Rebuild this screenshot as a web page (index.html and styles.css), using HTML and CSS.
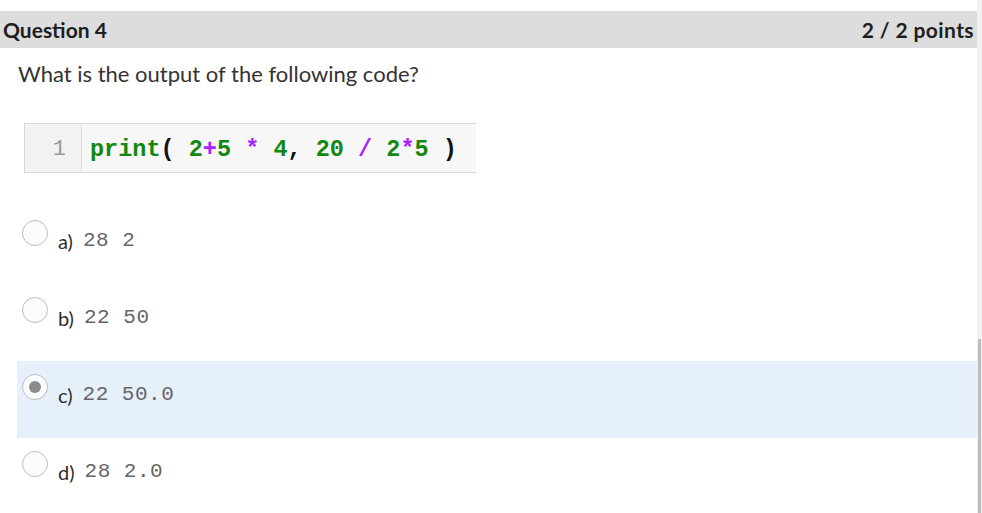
FILE: index.html
```html
<!DOCTYPE html>
<html>
<head>
<meta charset="utf-8">
<link rel="stylesheet" href="styles.css">
</head>
<body>
<div class="page">
  <div class="main">
    <div class="qhead">
      <span class="qtitle">Question 4</span>
      <span class="qpoints">2 / 2 points</span>
    </div>
    <p class="qtext">What is the output of the following code?</p>
    <div class="code">
      <div class="gutter">1</div>
      <div class="src"><span class="g">print</span>( <span class="g">2</span><span class="p">+</span><span class="g">5</span> <span class="p">*</span> <span class="g">4</span>, <span class="g">20</span> <span class="p">/</span> <span class="g">2</span><span class="p">*</span><span class="g">5</span> )</div>
    </div>
    <div class="options">
      <div class="opt"><span class="radio"></span><span class="lbl">a)</span><span class="val">28 2</span></div>
      <div class="opt"><span class="radio"></span><span class="lbl">b)</span><span class="val">22 50</span></div>
      <div class="opt sel"><span class="radio on"></span><span class="lbl">c)</span><span class="val">22 50.0</span></div>
      <div class="opt"><span class="radio"></span><span class="lbl">d)</span><span class="val">28 2.0</span></div>
    </div>
  </div>
  <div class="track"><div class="thumb"></div></div>
</div>
</body>
</html>
```

FILE: styles.css
```css
html, body { margin: 0; padding: 0; background: #fff; }
body { font-family: Lato, "Noto Sans", sans-serif; color: #2d2d2d; }
.page { display: flex; width: 982px; height: 513px; overflow: hidden; }
.main { width: 977px; flex: none; }
.track { width: 5px; flex: none; display: flex; flex-direction: column; background: #f1f1f1; }
.thumb { margin-top: 339px; flex: 1; background: #bdbdbd; width: 3px; margin-left: 1px; }
.qhead {
  margin-top: 11px; height: 37px; background: #dddddd;
  display: flex; justify-content: space-between; align-items: center;
  padding: 0 3px 0 3px; box-sizing: border-box;
  font-weight: 700; font-size: 21px; color: #1e1e1e;
}
.qpoints { letter-spacing: 0.4px; }
.qtext { margin: 12px 0 0 18px; font-size: 22px; line-height: 28px; color: #333; }
.code {
  margin: 35px 0 0 24px; width: 452px; height: 50px; box-sizing: border-box;
  display: flex; background: #f7f7f7;
  border: 1px solid #d8d8d8; border-right: none;
}
.gutter {
  width: 57px; box-sizing: border-box; border-right: 1px solid #e0e0e0;
  background: #f2f2f2; color: #999; text-align: right; padding-right: 15px;
  font-family: "Liberation Mono", monospace; font-size: 22px; line-height: 48px; padding-top: 2px;
}
.src {
  padding-left: 8px; padding-top: 2px; font-family: "Liberation Mono", monospace; font-weight: 700;
  font-size: 23.5px; line-height: 48px; color: #111; white-space: pre;
}
.g { color: #118811; }
.p { color: #aa22ff; }
.options { margin: 34px 0 0 17px; }
.opt { height: 77px; display: flex; align-items: flex-start; padding-left: 5px; box-sizing: border-box; padding-top: 13px; }
.sel { background: #e6f0fa; }
.radio {
  width: 26px; height: 26px; box-sizing: border-box; border-radius: 50%;
  border: 1px solid #bdbdbd; background: #fbfcfe; flex: none;
  display: flex; align-items: center; justify-content: center;
}
.radio.on::after { content: ""; width: 12px; height: 12px; border-radius: 50%; background: #8a8a8a; }
.lbl { margin-left: 10px; margin-top: 10px; font-size: 20px; line-height: 22px; color: #2d2d2d; }
.val { margin-left: 10px; margin-top: 10px; font-family: "Liberation Mono", monospace; font-size: 21px; line-height: 22px; color: #666; letter-spacing: 0.5px; white-space: pre; }
```
